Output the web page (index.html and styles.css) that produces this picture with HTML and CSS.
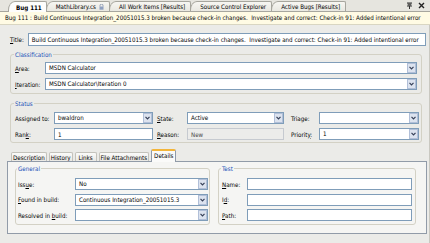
FILE: index.html
```html
<!DOCTYPE html>
<html>
<head>
<meta charset="utf-8">
<link rel="stylesheet" href="styles.css">
</head>
<body>
<div class="window">
  <div class="doc-tabs">
    <div class="doc-tab active"><b>Bug 111</b></div>
    <div class="doc-tab">MathLibrary.cs <svg class="lock" width="5" height="6" viewBox="0 0 5 6"><path d="M1 2.5V1.6A1.5 1.5 0 0 1 4 1.6V2.5" fill="none" stroke="#7a8aa8" stroke-width="0.8"/><rect x="0.5" y="2.5" width="4" height="3.2" fill="#8fa0c0"/></svg></div>
    <div class="doc-tab">All Work Items [Results]</div>
    <div class="doc-tab">Source Control Explorer</div>
    <div class="doc-tab">Active Bugs [Results]</div>
    <div class="doc-tools">
      <svg width="7" height="7" viewBox="0 0 7 7"><path d="M1 1h5M1.5 2h4M2 3h3M1 4h5M3.5 4v3" stroke="#333" stroke-width="1" fill="none"/></svg>
      <svg width="7" height="7" viewBox="0 0 7 7"><path d="M1 1l5 5M6 1l-5 5" stroke="#222" stroke-width="1.4" fill="none"/></svg>
    </div>
  </div>
  <div class="infobar">Bug 111 : Build Continuous Integration_20051015.3 broken because check-in changes.&nbsp; Investigate and correct: Check-in 91: Added intentional error</div>

  <div class="form">
    <div class="title-row">
      <span class="lbl"><u>T</u>itle:</span>
      <div class="box">Build Continuous Integration_20051015.3 broken because check-in changes.&nbsp; Investigate and correct: Check-in 91: Added intentional error</div>
    </div>

    <fieldset class="group classification">
      <legend>Classification</legend>
      <div class="grid2 g-class">
        <span class="lbl"><u>A</u>rea:</span>
        <div class="box combo"><span class="val">MSDN Calculator</span><span class="btn"></span></div>
        <span class="lbl"><u>I</u>teration:</span>
        <div class="box combo"><span class="val">MSDN Calculator\Iteration 0</span><span class="btn"></span></div>
      </div>
    </fieldset>

    <fieldset class="group status">
      <legend>Status</legend>
      <div class="grid6">
        <span class="lbl">Assigned to:</span>
        <div class="box combo"><span class="val">bwaldron</span><span class="btn"></span></div>
        <span class="lbl mid"><u>S</u>tate:</span>
        <div class="box combo"><span class="val">Active</span><span class="btn"></span></div>
        <span class="lbl right">Triage:</span>
        <div class="box combo"><span class="val"></span><span class="btn"></span></div>

        <span class="lbl">Ran<u>k</u>:</span>
        <div class="box">1</div>
        <span class="lbl mid"><u>R</u>eason:</span>
        <div class="box readonly">New</div>
        <span class="lbl right">Priorit<u>y</u>:</span>
        <div class="box combo"><span class="val">1</span><span class="btn"></span></div>
      </div>
    </fieldset>

    <div class="tabs">
      <div class="tab">Description</div>
      <div class="tab">History</div>
      <div class="tab">Links</div>
      <div class="tab">File Attachments</div>
      <div class="tab selected">Details</div>
    </div>
    <div class="tabpanel">
      <fieldset class="group general">
        <legend>General</legend>
        <div class="grid2 g-general">
          <span class="lbl">Iss<u>u</u>e:</span>
          <div class="box combo"><span class="val">No</span><span class="btn"></span></div>
          <span class="lbl"><u>F</u>ound in build:</span>
          <div class="box combo"><span class="val">Continuous Integration_20051015.3</span><span class="btn"></span></div>
          <span class="lbl">Resolved in <u>b</u>uild:</span>
          <div class="box combo"><span class="val"></span><span class="btn"></span></div>
        </div>
      </fieldset>
      <fieldset class="group test">
        <legend>Test</legend>
        <div class="grid2 g-test">
          <span class="lbl"><u>N</u>ame:</span>
          <div class="box"></div>
          <span class="lbl">I<u>d</u>:</span>
          <div class="box"></div>
          <span class="lbl"><u>P</u>ath:</span>
          <div class="box"></div>
        </div>
      </fieldset>
    </div>
  </div>
</div>
</body>
</html>
```

FILE: styles.css
```css
* { box-sizing: border-box; }
html, body { margin: 0; padding: 0; }
body {
  width: 430px;
  height: 243px;
  overflow: hidden;
  background: #ebebe8;
  font-family: "DejaVu Sans Condensed", "DejaVu Sans", sans-serif;
  font-stretch: condensed;
  font-size: 6.2px;
  color: #000;
}
.window {
  width: 430px;
  height: 243px;
  display: flex;
  flex-direction: column;
}

/* document tab strip */
.doc-tabs {
  height: 12px;
  display: flex;
  align-items: flex-end;
  padding-left: 8px;
  background: #e6e5df;
  border-bottom: 1px solid #a7a69e;
}
.doc-tab {
  height: 10px;
  padding: 0 5px 0 9px;
  display: flex;
  align-items: center;
  gap: 3px;
  border: 1px solid #a7a69e;
  border-bottom: none;
  border-radius: 7px 2px 0 0 / 9px 2px 0 0;
  margin-right: -1px;
  background: linear-gradient(#f7f6f2, #e9e8e1);
  white-space: nowrap;
}
.doc-tab.active {
  background: #fdfdfc;
  height: 11px;
  margin-bottom: -1px;
  padding: 0 4px 0 7px;
  position: relative;
  z-index: 1;
}
.doc-tools {
  margin-left: auto;
  display: flex;
  gap: 5px;
  align-items: center;
  height: 11px;
  padding-right: 5px;
}

/* yellow info bar */
.infobar {
  height: 13px;
  line-height: 12px;
  padding-left: 5px;
  background: #fffbe4;
  border-bottom: 1px solid #d9d6c2;
  white-space: nowrap;
  overflow: hidden;
}

.form {
  flex: 1;
  padding: 8px 2px 0 7px;
  display: flex;
  flex-direction: column;
  border-right: 1px solid #c9c8c1;
}

.title-row {
  display: flex;
  align-items: center;
  gap: 4px;
  margin: 0 1px 0 3px;
  height: 13px;
}
.title-row .box { flex: 1; height: 13px; }

.lbl { white-space: nowrap; }
.box {
  height: 12px;
  background: #fff;
  border: 1px solid #7f9db9;
  padding-left: 3px;
  display: flex;
  align-items: center;
  white-space: nowrap;
  overflow: hidden;
}
.box .val { flex: 1; line-height: 10px; }
.btn {
  width: 9px;
  height: 10px;
  background: #dce3ef url("data:image/svg+xml,%3Csvg xmlns='http://www.w3.org/2000/svg' width='9' height='10'%3E%3Cpath d='M2.5 3.8l2 2 2-2' stroke='%23364058' stroke-width='1.2' fill='none'/%3E%3C/svg%3E") no-repeat center;
  border: 1px solid #b1bfd8;
  flex: none;
}
.box.readonly { background: #ececea; border-color: #c6cad0; color: #4a4a4a; }

/* group boxes */
.group {
  margin: 0;
  border: 1px solid #d3d1c5;
  border-radius: 3px;
  min-width: 0;
}
.group legend {
  color: #2152b8;
  padding: 0 1px;
  margin-left: -1px;
  line-height: 7px;
  height: 7px;
}

.grid2 {
  display: grid;
  align-items: center;
  row-gap: 4px;
}

.classification { margin: 5px 5px 0 3px; padding: 4px 4px 3px 4px; }
.g-class { grid-template-columns: 30px 1fr; }

.status { margin: 6px 5px 0 3px; padding: 5px 3px 2px 4px; }
.grid6 {
  display: grid;
  grid-template-columns: 39px 99px 34px 97px 35px 100px;
  align-items: center;
  row-gap: 4px;
}
.grid6 .mid { padding-left: 4px; }
.grid6 .right { padding-left: 7px; }

/* tabs */
.tabs {
  display: flex;
  align-items: flex-end;
  margin-top: 1px;
  padding-left: 4px;
  height: 17px;
}
.tab {
  height: 9px;
  min-width: 22px;
  display: flex;
  align-items: center;
  justify-content: center;
  padding: 0 1px;
  border: 1px solid #c3c2bb;
  border-bottom: none;
  background: linear-gradient(#fbfbfa, #e9e8e3);
  margin-right: 2px;
  border-radius: 2px 2px 0 0;
  white-space: nowrap;
}
.tab.selected {
  height: 13px;
  align-items: flex-start;
  padding: 1px 2px 0;
  background: #fafaf9;
  border: 1px solid #909aa8;
  border-top: 2px solid #f3b53a;
  border-bottom: none;
  margin-bottom: -1px;
  position: relative;
  z-index: 1;
}

.tabpanel {
  height: 73px;
  border: 1px solid #919ba8;
  background: #f5f5f3;
  display: flex;
  gap: 8px;
  padding: 3px 0 0 7px;
}
.general { width: 195px; height: 60px; padding: 6px 1px 3px 2px; }
.test { width: 198px; height: 60px; padding: 6px 3px 3px 3px; }
.g-general { grid-template-columns: 57px 1fr; row-gap: 3.5px; }
.g-test { grid-template-columns: 25px 1fr; row-gap: 3.5px; }
```
